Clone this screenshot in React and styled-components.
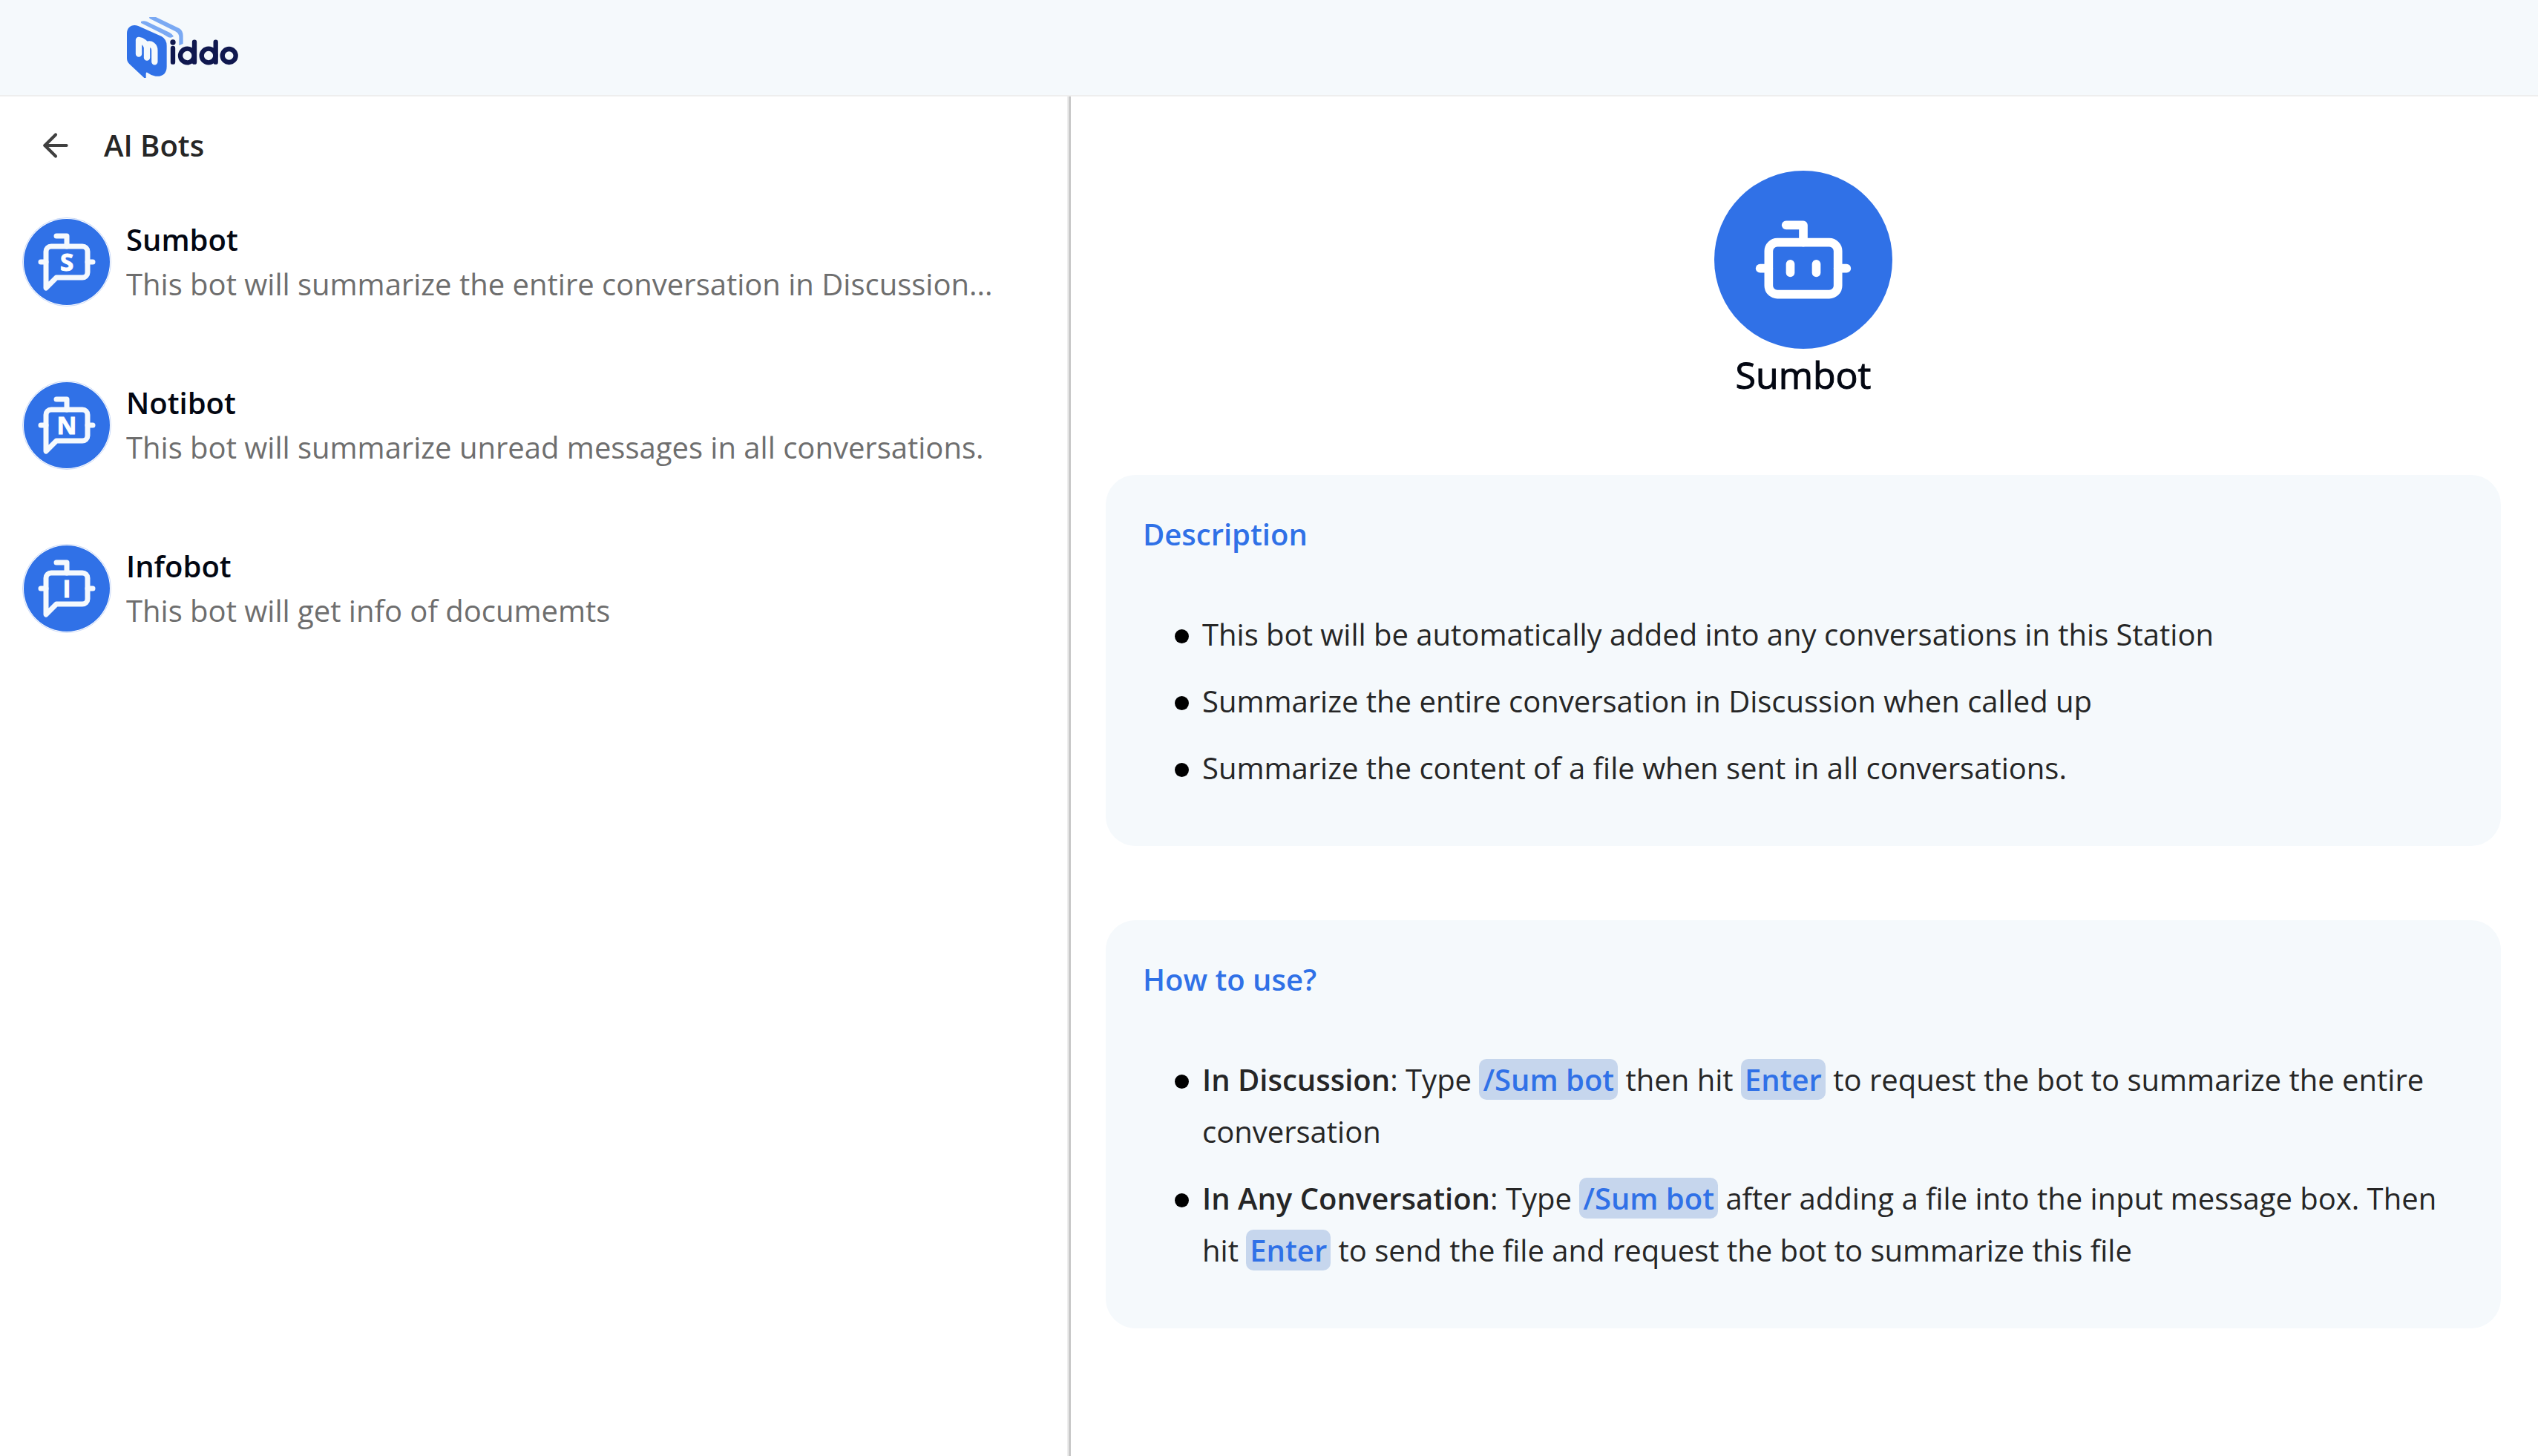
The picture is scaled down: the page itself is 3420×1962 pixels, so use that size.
import React from "react";
import styled, { createGlobalStyle } from "styled-components";
import { ArrowLeft, Bot } from "lucide-react";

const GlobalStyle = createGlobalStyle`
  * { box-sizing: border-box; }
  body {
    margin: 0;
    background: #ffffff;
    color: #262626;
    font-family: "Open Sans", "Noto Sans", sans-serif;
    font-size: 40px;
    line-height: 60px;
  }
  h1, h2, h3, p, ul { margin: 0; padding: 0; }
`;

const Page = styled.div`
  min-height: 100vh;
  display: flex;
  flex-direction: column;
`;

const TopBar = styled.header`
  height: 130px;
  flex: none;
  display: flex;
  align-items: center;
  padding: 0 171px;
  background: #f5f9fc;
  border-bottom: 2px solid #eeeeee;
`;

const LogoLink = styled.a`
  display: block;
  line-height: 0;
`;

const Body = styled.div`
  flex: 1;
  display: flex;
`;

const Sidebar = styled.aside`
  width: 1440px;
  flex: none;
  border-right: 2px solid #eeeeee;
`;

const SidebarHeader = styled.div`
  display: flex;
  align-items: center;
  gap: 40px;
  padding: 36px 50px 37px;
`;

const BackButton = styled.button`
  display: flex;
  padding: 0;
  border: 0;
  background: none;
  color: #404040;
  cursor: pointer;
`;

const SidebarTitle = styled.h1`
  font-size: 40px;
  font-weight: 600;
`;

const BotList = styled.ul`
  list-style: none;
  display: flex;
  flex-direction: column;
  gap: 40px;
`;

const BotRow = styled.button`
  width: 100%;
  display: flex;
  align-items: center;
  gap: 20px;
  padding: 30px;
  border: 0;
  background: none;
  font: inherit;
  text-align: left;
  cursor: pointer;
`;

const Avatar = styled.span`
  width: 120px;
  height: 120px;
  flex: none;
  display: flex;
  border-radius: 50%;
  border: 1px solid #c9d9f8;
  padding: 1px;
`;

const BotText = styled.span`
  display: flex;
  flex-direction: column;
  min-width: 0;
`;

const BotName = styled.span`
  font-weight: 600;
  color: #030712;
`;

const BotSummary = styled.span`
  color: #6e6e6e;
  overflow: hidden;
  text-overflow: ellipsis;
  white-space: nowrap;
`;

const Main = styled.main`
  flex: 1;
  min-width: 0;
  display: flex;
  flex-direction: column;
  gap: 100px;
  padding: 100px 50px 50px 47px;
  border-left: 3px solid #c8c8c8;
`;

const Profile = styled.section`
  display: flex;
  flex-direction: column;
  align-items: center;
`;

const ProfileIcon = styled.div`
  width: 240px;
  height: 240px;
  display: flex;
  align-items: center;
  justify-content: center;
  border-radius: 50%;
  background: #3071e7;
  color: #ffffff;
`;

const ProfileName = styled.h2`
  font-size: 50px;
  line-height: 70px;
  font-weight: 500;
  color: #030712;
  -webkit-text-stroke: 1px #030712;
`;

const Card = styled.section`
  padding: 50px 50px 70px;
  border-radius: 40px;
  background: #f5f9fc;
`;

const CardTitle = styled.h3`
  font-size: 40px;
  font-weight: 600;
  color: #3071e7;
`;

const Points = styled.ul`
  list-style: none;
  display: flex;
  flex-direction: column;
  gap: 20px;
  margin-top: 70px;
  padding-left: 43px;
  line-height: 70px;
`;

const Point = styled.li`
  display: flex;
  gap: 18px;

  &::before {
    content: "";
    flex: none;
    width: 19px;
    height: 19px;
    margin-top: 28px;
    border-radius: 50%;
    background: #000000;
  }
`;

const Strong = styled.strong`
  font-weight: 600;
`;

const Key = styled.code`
  padding: 0 5px;
  border-radius: 10px;
  background: #c6d6ed;
  color: #3071e7;
  font-family: inherit;
  font-weight: 600;
`;

function Logo() {
  return (
    <svg width="150" height="82" viewBox="0 0 450 246" role="img" aria-label="Middo">
      <path d="M57 18Q68 14 80 18L172 62Q186 70 189 78Q180 86 168 82L145 68L57 24Z" fill="#7aa9f3" />
      <path d="M90 0H117L212 46Q227 55 227 76V108Q220 110 211 115V82Q211 66 196 58L92 6Z" fill="#7aa9f3" />
      <path d="M0 66C0 40 22 26 46 36L140 78Q161 90 161 116V200C161 230 142 242 116 239Q98 236 82 224Q77 222 77 230V246H70L10 190Q0 180 0 166Z" fill="#3071e7" />
      <path d="M48 93V149M48 93C62 94 78 106 81 122V164M81 112C98 104 112 118 112 134V181" fill="none" stroke="#f5f9fc" strokeWidth="25" strokeLinecap="round" strokeLinejoin="round" />
      <g fill="none" stroke="#10184f" strokeWidth="19" strokeLinecap="round">
        <path d="M186 126V182M273 101V182M359 101V182" />
        <circle cx="244" cy="156" r="28" />
        <circle cx="330" cy="156" r="28" />
        <circle cx="413" cy="156" r="27" />
      </g>
      <circle cx="186" cy="102" r="11" fill="#10184f" />
    </svg>
  );
}

function BotAvatar({ letter }) {
  return (
    <Avatar>
      <svg width="116" height="116" viewBox="2 2 116 116" aria-hidden="true">
        <circle cx="60" cy="60" r="58" fill="#3071e7" />
        <g transform="translate(18 18) scale(3.5)" fill="none" stroke="#f5f9fd" strokeWidth="2" strokeLinecap="round" strokeLinejoin="round">
          <path d="M12 6V2H8" />
          <path d="m8 18-4 4V8a2 2 0 0 1 2-2h12a2 2 0 0 1 2 2v8a2 2 0 0 1-2 2Z" />
          <path d="M2 12h2M20 12h2" />
        </g>
        <text x="60" y="72" textAnchor="middle" fontSize="33" fontWeight="700" fill="#ffffff" stroke="#ffffff">
          {letter}
        </text>
      </svg>
    </Avatar>
  );
}

const bots = [
  { name: "Sumbot", letter: "S", summary: "This bot will summarize the entire conversation in Discussion..." },
  { name: "Notibot", letter: "N", summary: "This bot will summarize unread messages in all conversations." },
  { name: "Infobot", letter: "I", summary: "This bot will get info of documemts" },
];

export default function App() {
  return (
    <Page>
      <GlobalStyle />
      <TopBar>
        <LogoLink href="#">
          <Logo />
        </LogoLink>
      </TopBar>
      <Body>
        <Sidebar>
          <SidebarHeader>
            <BackButton type="button" aria-label="Back">
              <ArrowLeft size={50} />
            </BackButton>
            <SidebarTitle>AI Bots</SidebarTitle>
          </SidebarHeader>
          <BotList>
            {bots.map((bot) => (
              <li key={bot.name}>
                <BotRow type="button">
                  <BotAvatar letter={bot.letter} />
                  <BotText>
                    <BotName>{bot.name}</BotName>
                    <BotSummary>{bot.summary}</BotSummary>
                  </BotText>
                </BotRow>
              </li>
            ))}
          </BotList>
        </Sidebar>
        <Main>
          <Profile>
            <ProfileIcon>
              <Bot size={140} />
            </ProfileIcon>
            <ProfileName>Sumbot</ProfileName>
          </Profile>
          <Card>
            <CardTitle>Description</CardTitle>
            <Points>
              <Point><span>This bot will be automatically added into any conversations in this Station</span></Point>
              <Point><span>Summarize the entire conversation in Discussion when called up</span></Point>
              <Point><span>Summarize the content of a file when sent in all conversations.</span></Point>
            </Points>
          </Card>
          <Card>
            <CardTitle>How to use?</CardTitle>
            <Points>
              <Point>
                <span>
                  <Strong>In Discussion</Strong>: Type <Key>/Sum bot</Key> then hit <Key>Enter</Key> to request the
                  bot to summarize the entire conversation
                </span>
              </Point>
              <Point>
                <span>
                  <Strong>In Any Conversation</Strong>: Type <Key>/Sum bot</Key> after adding a file into the input
                  message box. Then hit <Key>Enter</Key> to send the file and request the bot to summarize this file
                </span>
              </Point>
            </Points>
          </Card>
        </Main>
      </Body>
    </Page>
  );
}
